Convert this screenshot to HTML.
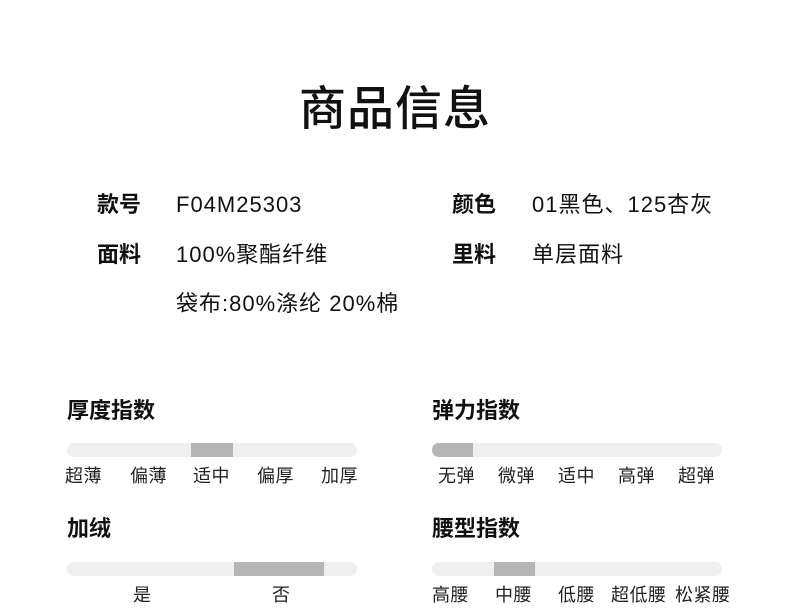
<!DOCTYPE html>
<html><head><meta charset="utf-8"><style>
body{margin:0;width:790px;height:612px;background:#fff;position:relative;overflow:hidden;font-family:"Liberation Sans","Noto Sans CJK SC",sans-serif;color:#111}
.a{position:absolute;white-space:nowrap;line-height:1}
.t{left:0;width:790px;text-align:center;top:85px;font-size:47px;font-weight:500;letter-spacing:1px}
.k{font-size:22px;font-weight:700}
.v{font-size:22px;letter-spacing:1px}
.h{font-size:22px;font-weight:700}
.bar{position:absolute;height:14px;width:290px;background:#efefef;border-radius:7px;overflow:hidden}
.bar i{position:absolute;top:0;height:14px;background:#b5b5b5}
.l{font-size:18px;color:#222;letter-spacing:0.5px}
</style></head><body>
<div class="a t">商品信息</div>
<div class="a k" style="left:97px;top:194px">款号</div>
<div class="a v" style="left:176px;top:194px">F04M25303</div>
<div class="a k" style="left:452px;top:194px">颜色</div>
<div class="a v" style="left:532px;top:194px">01黑色、125杏灰</div>
<div class="a k" style="left:97px;top:244px">面料</div>
<div class="a v" style="left:176px;top:244px">100%聚酯纤维</div>
<div class="a k" style="left:452px;top:244px">里料</div>
<div class="a v" style="left:532px;top:244px">单层面料</div>
<div class="a v" style="left:176px;top:293px">袋布:80%涤纶 20%棉</div>

<div class="a h" style="left:67px;top:400px">厚度指数</div>
<div class="bar" style="left:67px;top:443px"><i style="left:124px;width:42px"></i></div>
<div class="a l" style="left:65px;top:467px">超薄</div>
<div class="a l" style="left:130px;top:467px">偏薄</div>
<div class="a l" style="left:193px;top:467px">适中</div>
<div class="a l" style="left:257px;top:467px">偏厚</div>
<div class="a l" style="left:321px;top:467px">加厚</div>

<div class="a h" style="left:432px;top:400px">弹力指数</div>
<div class="bar" style="left:432px;top:443px"><i style="left:0;width:41px"></i></div>
<div class="a l" style="left:438px;top:467px">无弹</div>
<div class="a l" style="left:498px;top:467px">微弹</div>
<div class="a l" style="left:558px;top:467px">适中</div>
<div class="a l" style="left:618px;top:467px">高弹</div>
<div class="a l" style="left:678px;top:467px">超弹</div>

<div class="a h" style="left:67px;top:518px">加绒</div>
<div class="bar" style="left:67px;top:562px"><i style="left:167px;width:90px"></i></div>
<div class="a l" style="left:133px;top:586px">是</div>
<div class="a l" style="left:272px;top:586px">否</div>

<div class="a h" style="left:432px;top:518px">腰型指数</div>
<div class="bar" style="left:432px;top:562px"><i style="left:62px;width:41px"></i></div>
<div class="a l" style="left:432px;top:586px">高腰</div>
<div class="a l" style="left:495px;top:586px">中腰</div>
<div class="a l" style="left:558px;top:586px">低腰</div>
<div class="a l" style="left:611px;top:586px">超低腰</div>
<div class="a l" style="left:675px;top:586px">松紧腰</div>
</body></html>
